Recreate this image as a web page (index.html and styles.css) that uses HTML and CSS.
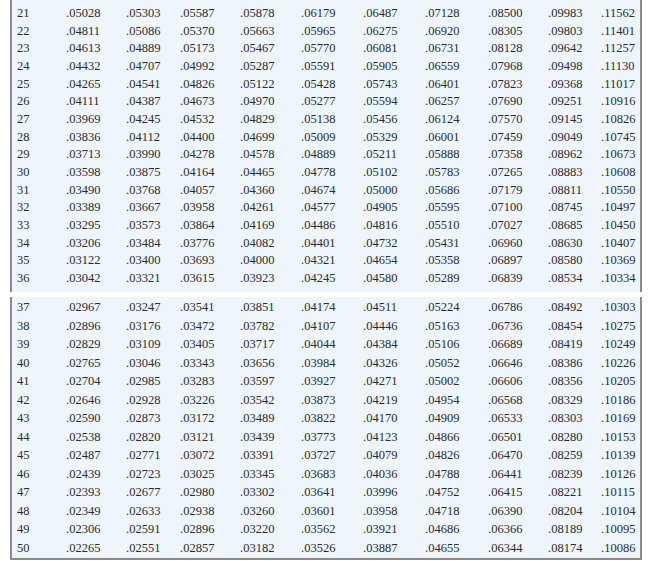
FILE: index.html
```html
<!DOCTYPE html>
<html>
<head>
<meta charset="utf-8">
<link rel="stylesheet" href="styles.css">
</head>
<body>
<div class="sheet">
  <div class="block block-top">
    <div>21</div><div>.05028</div><div>.05303</div><div>.05587</div><div>.05878</div><div>.06179</div><div>.06487</div><div>.07128</div><div>.08500</div><div>.09983</div><div>.11562</div>
    <div>22</div><div>.04811</div><div>.05086</div><div>.05370</div><div>.05663</div><div>.05965</div><div>.06275</div><div>.06920</div><div>.08305</div><div>.09803</div><div>.11401</div>
    <div>23</div><div>.04613</div><div>.04889</div><div>.05173</div><div>.05467</div><div>.05770</div><div>.06081</div><div>.06731</div><div>.08128</div><div>.09642</div><div>.11257</div>
    <div>24</div><div>.04432</div><div>.04707</div><div>.04992</div><div>.05287</div><div>.05591</div><div>.05905</div><div>.06559</div><div>.07968</div><div>.09498</div><div>.11130</div>
    <div>25</div><div>.04265</div><div>.04541</div><div>.04826</div><div>.05122</div><div>.05428</div><div>.05743</div><div>.06401</div><div>.07823</div><div>.09368</div><div>.11017</div>
    <div>26</div><div>.04111</div><div>.04387</div><div>.04673</div><div>.04970</div><div>.05277</div><div>.05594</div><div>.06257</div><div>.07690</div><div>.09251</div><div>.10916</div>
    <div>27</div><div>.03969</div><div>.04245</div><div>.04532</div><div>.04829</div><div>.05138</div><div>.05456</div><div>.06124</div><div>.07570</div><div>.09145</div><div>.10826</div>
    <div>28</div><div>.03836</div><div>.04112</div><div>.04400</div><div>.04699</div><div>.05009</div><div>.05329</div><div>.06001</div><div>.07459</div><div>.09049</div><div>.10745</div>
    <div>29</div><div>.03713</div><div>.03990</div><div>.04278</div><div>.04578</div><div>.04889</div><div>.05211</div><div>.05888</div><div>.07358</div><div>.08962</div><div>.10673</div>
    <div>30</div><div>.03598</div><div>.03875</div><div>.04164</div><div>.04465</div><div>.04778</div><div>.05102</div><div>.05783</div><div>.07265</div><div>.08883</div><div>.10608</div>
    <div>31</div><div>.03490</div><div>.03768</div><div>.04057</div><div>.04360</div><div>.04674</div><div>.05000</div><div>.05686</div><div>.07179</div><div>.08811</div><div>.10550</div>
    <div>32</div><div>.03389</div><div>.03667</div><div>.03958</div><div>.04261</div><div>.04577</div><div>.04905</div><div>.05595</div><div>.07100</div><div>.08745</div><div>.10497</div>
    <div>33</div><div>.03295</div><div>.03573</div><div>.03864</div><div>.04169</div><div>.04486</div><div>.04816</div><div>.05510</div><div>.07027</div><div>.08685</div><div>.10450</div>
    <div>34</div><div>.03206</div><div>.03484</div><div>.03776</div><div>.04082</div><div>.04401</div><div>.04732</div><div>.05431</div><div>.06960</div><div>.08630</div><div>.10407</div>
    <div>35</div><div>.03122</div><div>.03400</div><div>.03693</div><div>.04000</div><div>.04321</div><div>.04654</div><div>.05358</div><div>.06897</div><div>.08580</div><div>.10369</div>
    <div>36</div><div>.03042</div><div>.03321</div><div>.03615</div><div>.03923</div><div>.04245</div><div>.04580</div><div>.05289</div><div>.06839</div><div>.08534</div><div>.10334</div>
  </div>
  <div class="block block-bottom">
    <div>37</div><div>.02967</div><div>.03247</div><div>.03541</div><div>.03851</div><div>.04174</div><div>.04511</div><div>.05224</div><div>.06786</div><div>.08492</div><div>.10303</div>
    <div>38</div><div>.02896</div><div>.03176</div><div>.03472</div><div>.03782</div><div>.04107</div><div>.04446</div><div>.05163</div><div>.06736</div><div>.08454</div><div>.10275</div>
    <div>39</div><div>.02829</div><div>.03109</div><div>.03405</div><div>.03717</div><div>.04044</div><div>.04384</div><div>.05106</div><div>.06689</div><div>.08419</div><div>.10249</div>
    <div>40</div><div>.02765</div><div>.03046</div><div>.03343</div><div>.03656</div><div>.03984</div><div>.04326</div><div>.05052</div><div>.06646</div><div>.08386</div><div>.10226</div>
    <div>41</div><div>.02704</div><div>.02985</div><div>.03283</div><div>.03597</div><div>.03927</div><div>.04271</div><div>.05002</div><div>.06606</div><div>.08356</div><div>.10205</div>
    <div>42</div><div>.02646</div><div>.02928</div><div>.03226</div><div>.03542</div><div>.03873</div><div>.04219</div><div>.04954</div><div>.06568</div><div>.08329</div><div>.10186</div>
    <div>43</div><div>.02590</div><div>.02873</div><div>.03172</div><div>.03489</div><div>.03822</div><div>.04170</div><div>.04909</div><div>.06533</div><div>.08303</div><div>.10169</div>
    <div>44</div><div>.02538</div><div>.02820</div><div>.03121</div><div>.03439</div><div>.03773</div><div>.04123</div><div>.04866</div><div>.06501</div><div>.08280</div><div>.10153</div>
    <div>45</div><div>.02487</div><div>.02771</div><div>.03072</div><div>.03391</div><div>.03727</div><div>.04079</div><div>.04826</div><div>.06470</div><div>.08259</div><div>.10139</div>
    <div>46</div><div>.02439</div><div>.02723</div><div>.03025</div><div>.03345</div><div>.03683</div><div>.04036</div><div>.04788</div><div>.06441</div><div>.08239</div><div>.10126</div>
    <div>47</div><div>.02393</div><div>.02677</div><div>.02980</div><div>.03302</div><div>.03641</div><div>.03996</div><div>.04752</div><div>.06415</div><div>.08221</div><div>.10115</div>
    <div>48</div><div>.02349</div><div>.02633</div><div>.02938</div><div>.03260</div><div>.03601</div><div>.03958</div><div>.04718</div><div>.06390</div><div>.08204</div><div>.10104</div>
    <div>49</div><div>.02306</div><div>.02591</div><div>.02896</div><div>.03220</div><div>.03562</div><div>.03921</div><div>.04686</div><div>.06366</div><div>.08189</div><div>.10095</div>
    <div>50</div><div>.02265</div><div>.02551</div><div>.02857</div><div>.03182</div><div>.03526</div><div>.03887</div><div>.04655</div><div>.06344</div><div>.08174</div><div>.10086</div>
  </div>
</div>
</body>
</html>
```

FILE: styles.css
```css
html, body {
  margin: 0;
  padding: 0;
  background: #ffffff;
}

.sheet {
  margin-left: 10px;
  width: 632px;
  font-family: "Liberation Serif", "Times New Roman", serif;
  font-size: 12.5px;
  color: #2b2b2b;
}

.block {
  display: grid;
  grid-template-columns: 49px 60px 54px 60px 61px 62px 62px 63px 60px 53px 1fr;
  background: #eef6fc;
  border-left: 2px solid #8a8a8a;
  border-right: 2px solid #8a8a8a;
  padding-left: 5px;
}

.block > div {
  white-space: nowrap;
}

.block-top {
  grid-auto-rows: 17.67px;
  line-height: 17.67px;
  padding-top: 5px;
  padding-bottom: 4px;
}

.block-bottom {
  margin-top: 5px;
  grid-auto-rows: 18.5px;
  line-height: 18.5px;
  padding-top: 1.5px;
  padding-bottom: 1px;
  border-bottom: 2px solid #8a8a8a;
}
```
